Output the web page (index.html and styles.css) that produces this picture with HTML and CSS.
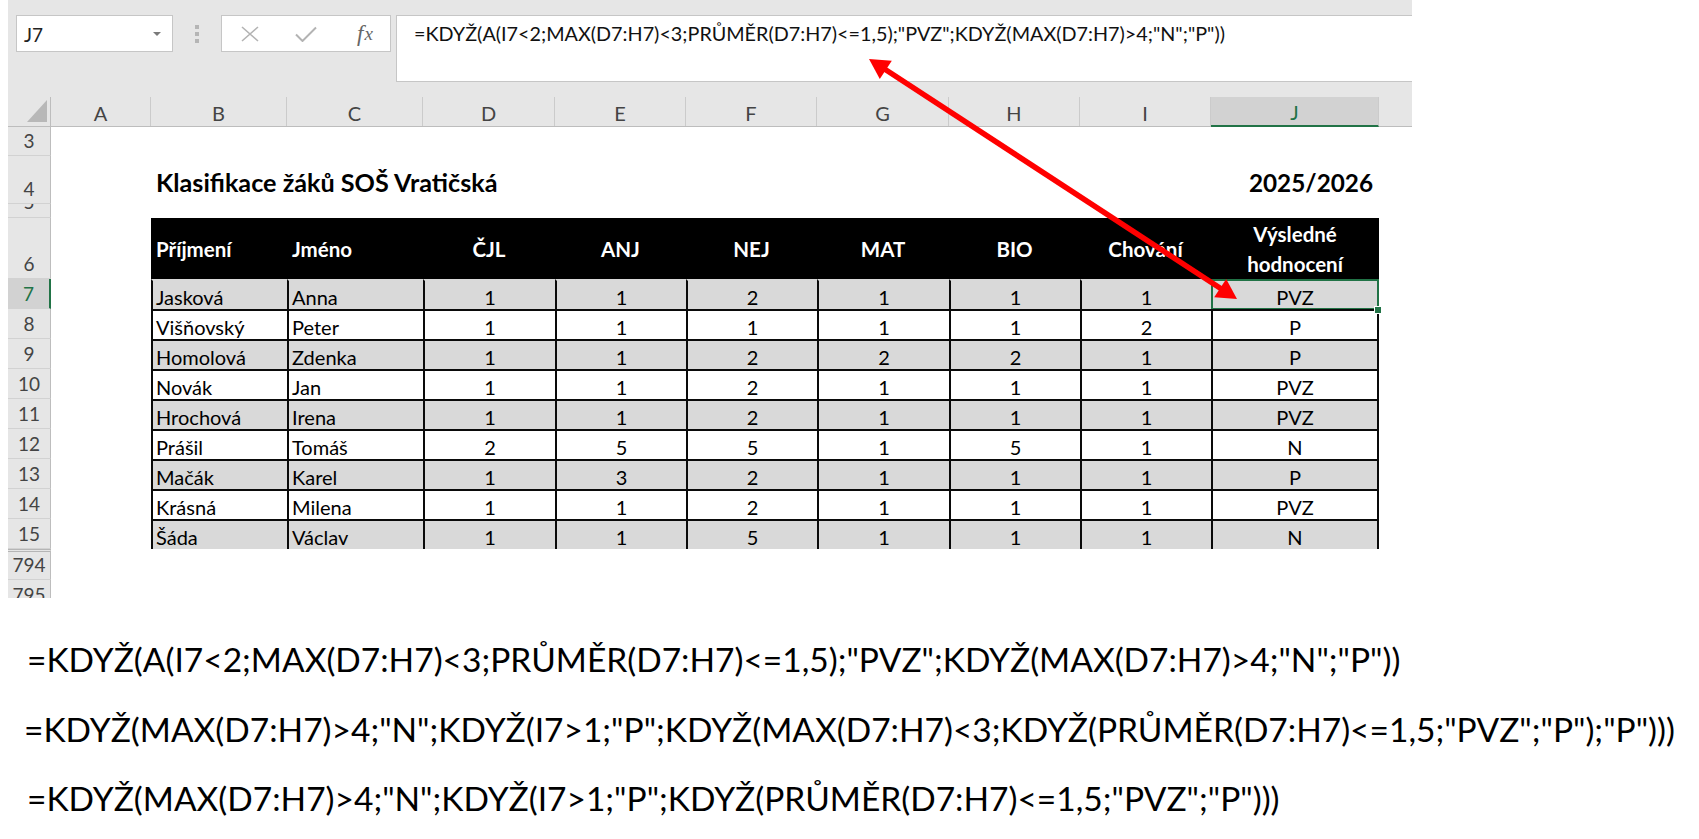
FILE: index.html
```html
<!DOCTYPE html>
<html lang="cs">
<head>
<meta charset="utf-8">
<title>Klasifikace žáků</title>
<link rel="stylesheet" href="styles.css">
</head>
<body>
<div class="page">
  <div class="excel">
    <div class="toolbar">
      <div class="namebox"><span>J7</span><span class="nb-arrow"></span></div>
      <div class="grip"><i></i><i></i><i></i></div>
      <div class="fxbox">
        <span class="fxbtn">
          <svg width="18" height="16" viewBox="0 0 18 16"><path d="M1 1 L17 15 M17 1 L1 15" stroke="#b3b3b3" stroke-width="1.6" fill="none"/></svg>
        </span>
        <span class="fxbtn">
          <svg width="22" height="16" viewBox="0 0 22 16"><path d="M1 8.5 L7.5 15 L21 1.5" stroke="#b3b3b3" stroke-width="2" fill="none"/></svg>
        </span>
        <span class="fxbtn fx"><i>f</i><i class="x">x</i></span>
      </div>
      <div class="formulabar">=KDYŽ(A(I7&lt;2;MAX(D7:H7)&lt;3;PRŮMĚR(D7:H7)&lt;=1,5);"PVZ";KDYŽ(MAX(D7:H7)&gt;4;"N";"P"))</div>
    </div>

    <div class="colheads">
      <div class="corner"><svg width="43" height="29" viewBox="0 0 43 29"><path d="M19 25 L39 25 L39 3 Z" fill="#b8b8b8"/></svg></div>
      <div class="ch w-a">A</div>
      <div class="ch w-b">B</div>
      <div class="ch w-c">C</div>
      <div class="ch w-d">D</div>
      <div class="ch w-e">E</div>
      <div class="ch w-f">F</div>
      <div class="ch w-g">G</div>
      <div class="ch w-h">H</div>
      <div class="ch w-i">I</div>
      <div class="ch w-j ch-sel">J</div>
      <div class="ch-rest"></div>
    </div>

    <div class="row h29"><div class="rh">3</div></div>
    <div class="row h48">
      <div class="rh">4</div>
      <div class="w-a"></div>
      <div class="title">Klasifikace žáků SOŠ Vratičská</div>
      <div class="year w-j">2025/2026</div>
    </div>
    <div class="row h14"><div class="rh rh-squash"><span>5</span></div></div>
    <div class="row h61">
      <div class="rh">6</div>
      <div class="w-a"></div>
      <div class="hc w-b left">Příjmení</div>
      <div class="hc w-c left">Jméno</div>
      <div class="hc w-d">ČJL</div>
      <div class="hc w-e">ANJ</div>
      <div class="hc w-f">NEJ</div>
      <div class="hc w-g">MAT</div>
      <div class="hc w-h">BIO</div>
      <div class="hc w-i">Chování</div>
      <div class="hc w-j wrap">Výsledné<br>hodnocení</div>
    </div>

    <div class="row h30 data gray first">
      <div class="rh rh-sel">7</div><div class="w-a"></div>
      <div class="dc w-b left">Jasková</div><div class="dc w-c left">Anna</div>
      <div class="dc w-d">1</div><div class="dc w-e">1</div><div class="dc w-f">2</div><div class="dc w-g">1</div><div class="dc w-h">1</div><div class="dc w-i">1</div>
      <div class="dc w-j last selcell">PVZ<span class="sel"></span><span class="handle"></span></div>
    </div>
    <div class="row h30 data">
      <div class="rh">8</div><div class="w-a"></div>
      <div class="dc w-b left">Višňovský</div><div class="dc w-c left">Peter</div>
      <div class="dc w-d">1</div><div class="dc w-e">1</div><div class="dc w-f">1</div><div class="dc w-g">1</div><div class="dc w-h">1</div><div class="dc w-i">2</div>
      <div class="dc w-j last">P</div>
    </div>
    <div class="row h30 data gray">
      <div class="rh">9</div><div class="w-a"></div>
      <div class="dc w-b left">Homolová</div><div class="dc w-c left">Zdenka</div>
      <div class="dc w-d">1</div><div class="dc w-e">1</div><div class="dc w-f">2</div><div class="dc w-g">2</div><div class="dc w-h">2</div><div class="dc w-i">1</div>
      <div class="dc w-j last">P</div>
    </div>
    <div class="row h30 data">
      <div class="rh">10</div><div class="w-a"></div>
      <div class="dc w-b left">Novák</div><div class="dc w-c left">Jan</div>
      <div class="dc w-d">1</div><div class="dc w-e">1</div><div class="dc w-f">2</div><div class="dc w-g">1</div><div class="dc w-h">1</div><div class="dc w-i">1</div>
      <div class="dc w-j last">PVZ</div>
    </div>
    <div class="row h30 data gray">
      <div class="rh">11</div><div class="w-a"></div>
      <div class="dc w-b left">Hrochová</div><div class="dc w-c left">Irena</div>
      <div class="dc w-d">1</div><div class="dc w-e">1</div><div class="dc w-f">2</div><div class="dc w-g">1</div><div class="dc w-h">1</div><div class="dc w-i">1</div>
      <div class="dc w-j last">PVZ</div>
    </div>
    <div class="row h30 data">
      <div class="rh">12</div><div class="w-a"></div>
      <div class="dc w-b left">Prášil</div><div class="dc w-c left">Tomáš</div>
      <div class="dc w-d">2</div><div class="dc w-e">5</div><div class="dc w-f">5</div><div class="dc w-g">1</div><div class="dc w-h">5</div><div class="dc w-i">1</div>
      <div class="dc w-j last">N</div>
    </div>
    <div class="row h30 data gray">
      <div class="rh">13</div><div class="w-a"></div>
      <div class="dc w-b left">Mačák</div><div class="dc w-c left">Karel</div>
      <div class="dc w-d">1</div><div class="dc w-e">3</div><div class="dc w-f">2</div><div class="dc w-g">1</div><div class="dc w-h">1</div><div class="dc w-i">1</div>
      <div class="dc w-j last">P</div>
    </div>
    <div class="row h30 data">
      <div class="rh">14</div><div class="w-a"></div>
      <div class="dc w-b left">Krásná</div><div class="dc w-c left">Milena</div>
      <div class="dc w-d">1</div><div class="dc w-e">1</div><div class="dc w-f">2</div><div class="dc w-g">1</div><div class="dc w-h">1</div><div class="dc w-i">1</div>
      <div class="dc w-j last">PVZ</div>
    </div>
    <div class="row h30 data gray">
      <div class="rh">15</div><div class="w-a"></div>
      <div class="dc w-b left">Šáda</div><div class="dc w-c left">Václav</div>
      <div class="dc w-d">1</div><div class="dc w-e">1</div><div class="dc w-f">5</div><div class="dc w-g">1</div><div class="dc w-h">1</div><div class="dc w-i">1</div>
      <div class="dc w-j last">N</div>
    </div>
    <div class="row h31"><div class="rh rh-hidden">794</div></div>
    <div class="row h30"><div class="rh">795</div></div>
  </div>

  <div class="formulas">
    <div class="fl fl1">=KDYŽ(A(I7&lt;2;MAX(D7:H7)&lt;3;PRŮMĚR(D7:H7)&lt;=1,5);"PVZ";KDYŽ(MAX(D7:H7)&gt;4;"N";"P"))</div>
    <div class="fl fl2">=KDYŽ(MAX(D7:H7)&gt;4;"N";KDYŽ(I7&gt;1;"P";KDYŽ(MAX(D7:H7)&lt;3;KDYŽ(PRŮMĚR(D7:H7)&lt;=1,5;"PVZ";"P");"P")))</div>
    <div class="fl fl3">=KDYŽ(MAX(D7:H7)&gt;4;"N";KDYŽ(I7&gt;1;"P";KDYŽ(PRŮMĚR(D7:H7)&lt;=1,5;"PVZ";"P")))</div>
  </div>

  <svg class="arrow" width="1699" height="839" viewBox="0 0 1699 839">
    <line x1="883" y1="68" x2="1223" y2="290" stroke="#ff0000" stroke-width="5.5"/>
    <polygon points="869,59 879.8,79.1 891.8,60.7" fill="#ff0000"/>
    <polygon points="1237,299 1214.2,297.3 1226.2,278.9" fill="#ff0000"/>
  </svg>
</div>
</body>
</html>
```

FILE: styles.css
```css
* { box-sizing: border-box; }
html, body { margin: 0; padding: 0; background: #fff; }
body {
  font-family: "Lato", "Noto Sans", "DejaVu Sans", sans-serif;
  color: #000;
  width: 1699px;
  height: 839px;
  overflow: hidden;
}
.page { position: relative; width: 1699px; height: 839px; }

.excel {
  margin-left: 8px;
  width: 1404px;
  height: 598px;
  overflow: hidden;
  display: flex;
  flex-direction: column;
}

/* toolbar */
.toolbar {
  height: 97px;
  flex: none;
  background: #e6e6e6;
  display: flex;
  align-items: flex-start;
  padding-top: 15px;
}
.namebox {
  margin-left: 8px;
  width: 157px;
  height: 37px;
  background: #fff;
  border: 1px solid #c6c6c6;
  display: flex;
  align-items: center;
  justify-content: space-between;
  padding: 1px 11px 0 7px;
  font-size: 19px;
  color: #222;
}
.nb-arrow {
  width: 0;
  height: 0;
  border-left: 4.5px solid transparent;
  border-right: 4.5px solid transparent;
  border-top: 4.5px solid #7a7a7a;
}
.grip {
  width: 48px;
  height: 37px;
  display: flex;
  flex-direction: column;
  align-items: center;
  justify-content: center;
  gap: 3px;
}
.grip i { display: block; width: 4px; height: 4px; background: #b5b5b5; }
.fxbox {
  width: 170px;
  height: 37px;
  background: #fff;
  border: 1px solid #c6c6c6;
  display: flex;
  align-items: center;
}
.fxbtn {
  width: 56px;
  display: flex;
  justify-content: center;
  align-items: center;
}
.fx {
  font-family: "Liberation Serif", "DejaVu Serif", serif;
  font-size: 23px;
  color: #666;
  padding-left: 6px;
}
.fx i { font-style: italic; }
.fx .x { font-size: 19px; margin-left: 1px; }
.formulabar {
  margin-left: 5px;
  flex: 1;
  height: 67px;
  background: #fff;
  border: 1px solid #c6c6c6;
  border-right: none;
  padding: 4px 0 0 17px;
  font-size: 19.8px;
  line-height: 26px;
  color: #111;
  white-space: nowrap;
}

/* column headers */
.colheads {
  height: 30px;
  flex: none;
  display: flex;
  background: #e6e6e6;
  border-bottom: 1px solid #bdbdbd;
}
.corner {
  width: 43px;
  flex: none;
  border-right: 1px solid #bdbdbd;
}
.corner svg { display: block; }
.ch {
  flex: none;
  display: flex;
  justify-content: center;
  align-items: center;
  padding-top: 2px;
  font-size: 20px;
  color: #444;
  border-right: 1px solid #cbcbcb;
}
.ch-sel {
  background: #d2d2d2;
  color: #217346;
  border-bottom: 2px solid #217346;
  margin-bottom: -1px;
}
.ch-rest { flex: 1; }

.w-a { width: 100px; flex: none; }
.w-b { width: 136px; flex: none; }
.w-c { width: 136px; flex: none; }
.w-d { width: 132px; flex: none; }
.w-e { width: 131px; flex: none; }
.w-f { width: 131px; flex: none; }
.w-g { width: 132px; flex: none; }
.w-h { width: 131px; flex: none; }
.w-i { width: 131px; flex: none; }
.w-j { width: 168px; flex: none; }

/* rows */
.row { display: flex; flex: none; }
.h29 { height: 29px; }
.h48 { height: 48px; }
.h14 { height: 14px; }
.h61 { height: 61px; }
.h30 { height: 30px; }
.h31 { height: 31px; }

.rh {
  width: 43px;
  flex: none;
  background: #e6e6e6;
  border-right: 1px solid #bdbdbd;
  border-bottom: 1px solid #d2d2d2;
  display: flex;
  justify-content: center;
  align-items: flex-end;
  padding-bottom: 4px;
  font-size: 19px;
  line-height: 20px;
  color: #444;
  overflow: hidden;
}
.rh-squash {
  align-items: flex-start;
  padding-bottom: 0;
}
.rh-squash span { display: block; margin-top: -12px; }
.rh-sel {
  background: #d2d2d2;
  color: #217346;
  border-right: 2px solid #217346;
}
.rh-hidden { border-top: 3px double #b5b5b5; }

/* title row */
.title {
  width: 1060px;
  flex: none;
  display: flex;
  align-items: center;
  padding: 4px 0 0 5px;
  font-weight: 700;
  font-size: 25.2px;
  white-space: nowrap;
}
.year {
  display: flex;
  align-items: center;
  justify-content: flex-end;
  padding: 4px 6px 0 0;
  font-weight: 700;
  font-size: 24.3px;
}

/* header cells */
.hc {
  background: #000;
  color: #fff;
  font-weight: 700;
  font-size: 20.5px;
  display: flex;
  align-items: center;
  justify-content: center;
  text-align: center;
}
.hc.left { justify-content: flex-start; padding-left: 5px; }
.hc.wrap { line-height: 30px; }

/* data cells */
.dc {
  position: relative;
  display: flex;
  align-items: center;
  justify-content: center;
  padding-top: 3px;
  font-size: 20px;
  border-left: 2px solid #0a0a0a;
  border-top: 2px solid #0a0a0a;
  background: #fff;
  white-space: nowrap;
}
.gray .dc { background: #d9d9d9; }
.first .dc { border-top-color: transparent; }
.dc.left { justify-content: flex-start; padding-left: 3px; }
.dc.last { border-right: 2px solid #0a0a0a; }

.sel {
  position: absolute;
  left: -2px;
  top: -2px;
  right: -2px;
  bottom: -1px;
  border: 2px solid #217346;
}
.handle {
  position: absolute;
  right: -5px;
  bottom: -5px;
  width: 8px;
  height: 8px;
  background: #217346;
  border: 1px solid #fff;
  z-index: 2;
}

/* formulas below */
.formulas {
  margin-top: 27px;
  font-size: 33.5px;
  color: #000;
}
.fl { height: 69.5px; line-height: 69.5px; white-space: nowrap; }
.fl1 { padding-left: 27px; }
.fl2 { padding-left: 24px; }
.fl3 { padding-left: 27px; }

.arrow {
  position: absolute;
  left: 0;
  top: 0;
  pointer-events: none;
}
```
